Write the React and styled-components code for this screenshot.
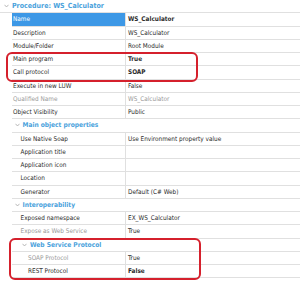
import React from 'react'
import styled, { createGlobalStyle, css } from 'styled-components'

const GlobalStyle = createGlobalStyle`
  html, body {
    margin: 0;
    padding: 0;
    background: #ffffff;
  }
  body {
    font-family: "DejaVu Sans Condensed", "DejaVu Sans", Tahoma, sans-serif;
    font-size: 6.4px;
    color: #2b2b2b;
  }
`

const ROW = 13.25

const Panel = styled.div`
  width: 300px;
  height: 288px;
  overflow: hidden;
`

const Row = styled.div`
  display: grid;
  grid-template-columns: 114px 167px;
  margin-left: 12px;
  height: ${ROW}px;
  box-sizing: border-box;
  border-bottom: 1px solid #e0e0e0;
  align-items: stretch;
`

const Label = styled.div`
  display: flex;
  align-items: center;
  padding-left: ${p => 1 + p.$level * 7.5}px;
  border-right: 1px solid #e0e0e0;
  white-space: nowrap;
  overflow: hidden;
  color: ${p => (p.$muted ? '#9a9a9a' : '#2b2b2b')};
  ${p => p.$selected && css`
    background: #3d98e6;
    color: #ffffff;
  `}
`

const Value = styled.div`
  display: flex;
  align-items: center;
  padding-left: 2px;
  white-space: nowrap;
  overflow: hidden;
  font-weight: ${p => (p.$bold ? 700 : 400)};
  color: ${p => (p.$muted ? '#9a9a9a' : '#2b2b2b')};
`

const HeaderRow = styled.div`
  display: flex;
  align-items: center;
  height: ${ROW}px;
  box-sizing: border-box;
  margin-left: ${p => (p.$top ? 0 : 12)}px;
  padding-left: ${p => (p.$top ? 4 : p.$level * 7.5 - 5)}px;
  border-bottom: 1px solid #e0e0e0;
  gap: 3px;
  color: #4aa2dc;
  font-weight: 700;
  font-size: ${p => (p.$top ? 7 : 6.6)}px;
`

const Chevron = styled.svg`
  width: 5px;
  height: 4px;
  flex: none;
`

const Highlight = styled.div`
  position: relative;
  &::after {
    content: '';
    position: absolute;
    left: ${p => p.$left}px;
    width: ${p => p.$width}px;
    top: -1px;
    bottom: -2px;
    border: 2px solid #d5202c;
    border-radius: 6px;
    pointer-events: none;
  }
`

const Caret = () => (
  <Chevron viewBox="0 0 5 4">
    <polyline points="0.5,0.8 2.5,3 4.5,0.8" fill="none" stroke="#a8a8a8" strokeWidth="0.8" />
  </Chevron>
)

const Group = ({ title, level = 0, top }) => (
  <HeaderRow $top={top} $level={level}>
    <Caret />
    <span>{title}</span>
  </HeaderRow>
)

const Prop = ({ label, value, level = 0, muted, mutedValue, bold, selected }) => (
  <Row>
    <Label $level={level} $muted={muted} $selected={selected}>{label}</Label>
    <Value $bold={bold} $muted={mutedValue}>{value}</Value>
  </Row>
)

const App = () => (
  <Panel>
    <GlobalStyle />
    <Group top title="Procedure: WS_Calculator" />
    <Prop selected label="Name" value="WS_Calculator" bold />
    <Prop label="Description" value="WS_Calculator" />
    <Prop label="Module/Folder" value="Root Module" />
    <Highlight $left={6} $width={188}>
      <Prop label="Main program" value="True" bold />
      <Prop label="Call protocol" value="SOAP" bold />
    </Highlight>
    <Prop label="Execute in new LUW" value="False" />
    <Prop label="Qualified Name" value="WS_Calculator" muted mutedValue />
    <Prop label="Object Visibility" value="Public" />
    <Group level={1} title="Main object properties" />
    <Prop level={1} label="Use Native Soap" value="Use Environment property value" />
    <Prop level={1} label="Application title" value="" />
    <Prop level={1} label="Application icon" value="" />
    <Prop level={1} label="Location" value="" />
    <Prop level={1} label="Generator" value="Default (C# Web)" />
    <Group level={1} title="Interoperability" />
    <Prop level={1} label="Exposed namespace" value="EX_WS_Calculator" />
    <Prop level={1} muted label="Expose as Web Service" value="True" />
    <Highlight $left={9} $width={188}>
      <Group level={2} title="Web Service Protocol" />
      <Prop level={2} muted label="SOAP Protocol" value="True" />
      <Prop level={2} label="REST Protocol" value="False" bold />
    </Highlight>
  </Panel>
)

export default App
